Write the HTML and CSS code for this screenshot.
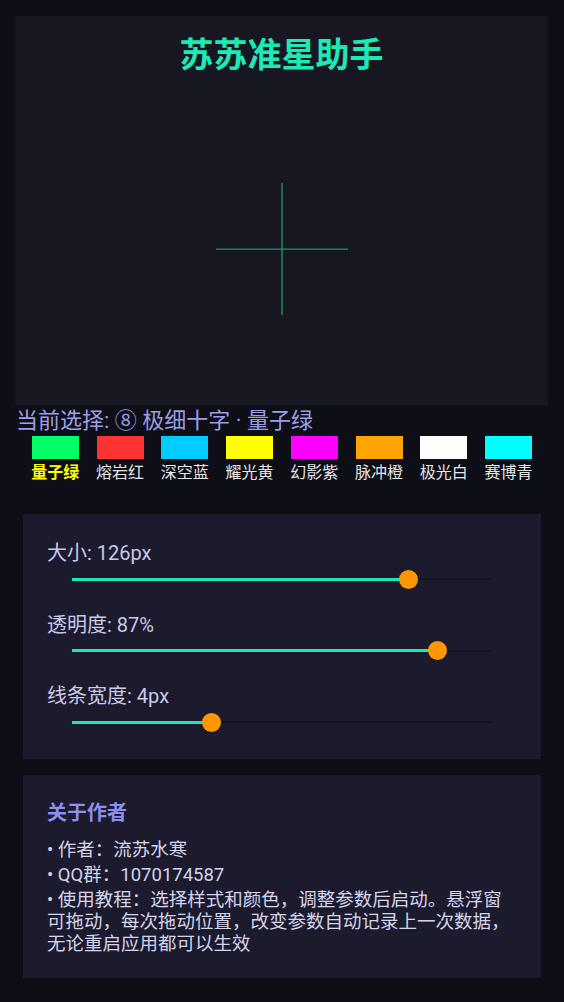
FILE: index.html
```html
<!DOCTYPE html>
<html lang="zh-CN">
<head>
<meta charset="UTF-8">
<meta name="viewport" content="width=device-width, initial-scale=1.0">
<title>苏苏准星助手</title>
<link rel="stylesheet" href="styles.css">
</head>
<body>
<div class="app">
    <section class="preview">
        <h1 class="title">苏苏准星助手</h1>
        <!-- 极细十字 -->
        <svg class="cross" width="132" height="132" viewBox="0 0 132 132">
            <rect x="65" y="0" width="2" height="132" fill="#1f6d4d" />
            <rect x="0" y="65.5" width="132" height="1.3" fill="#2b8c63" />
        </svg>
    </section>

    <p class="current">当前选择: ⑧ 极细十字 · 量子绿</p>

    <ul class="colors">
        <li class="active"><span class="swatch green"></span><span class="name">量子绿</span></li>
        <li><span class="swatch red"></span><span class="name">熔岩红</span></li>
        <li><span class="swatch blue"></span><span class="name">深空蓝</span></li>
        <li><span class="swatch yellow"></span><span class="name">耀光黄</span></li>
        <li><span class="swatch purple"></span><span class="name">幻影紫</span></li>
        <li><span class="swatch orange"></span><span class="name">脉冲橙</span></li>
        <li><span class="swatch white"></span><span class="name">极光白</span></li>
        <li><span class="swatch cyan"></span><span class="name">赛博青</span></li>
    </ul>

    <section class="card sliders">
        <div class="field">
            <label>大小: 126px</label>
            <div class="slider">
                <div class="fill" style="width: 80%"></div>
                <span class="thumb" style="left: 80%"></span>
            </div>
        </div>
        <div class="field">
            <label>透明度: 87%</label>
            <div class="slider">
                <div class="fill" style="width: 87%"></div>
                <span class="thumb" style="left: 87%"></span>
            </div>
        </div>
        <div class="field">
            <label>线条宽度: 4px</label>
            <div class="slider">
                <div class="fill" style="width: 33.3%"></div>
                <span class="thumb" style="left: 33.3%"></span>
            </div>
        </div>
    </section>

    <section class="card about">
        <h2>关于作者</h2>
        <ul>
            <li>• 作者：流苏水寒</li>
            <li>• QQ群：1070174587</li>
            <li>• 使用教程：选择样式和颜色，调整参数后启动。悬浮窗可拖动，每次拖动位置，改变参数自动记录上一次数据，无论重启应用都可以生效</li>
        </ul>
    </section>
</div>
</body>
</html>
```

FILE: styles.css
```css
* {
    box-sizing: border-box;
}
body {
    margin: 0;
    background: #0d0e16;
    font-family: Roboto, "Noto Sans CJK SC", sans-serif;
}
.preview {
    margin: 16px 16px 0 15px;
    height: 389px;
    padding-top: 19px;
    display: flex;
    flex-direction: column;
    align-items: center;
    background: #161721;
}
.title {
    margin: 0;
    font-size: 34px;
    line-height: 40px;
    font-weight: bold;
    color: #1de9b6;
}
.cross {
    display: block;
    margin-top: 108px;
}
.current {
    margin: 2px 0 0;
    padding-left: 16px;
    font-size: 22px;
    line-height: 28px;
    color: #9b9ee6;
}
.colors {
    margin: 1px 0 0;
    padding: 0 23px;
    list-style: none;
    display: grid;
    grid-template-columns: repeat(8, 1fr);
}
.colors li {
    display: flex;
    flex-direction: column;
    align-items: center;
}
.swatch {
    width: 47px;
    height: 23px;
}
.green { background: #00ff66; }
.red { background: #ff3333; }
.blue { background: #00ccff; }
.yellow { background: #ffff00; }
.purple { background: #ff00ff; }
.orange { background: #ffa500; }
.white { background: #ffffff; }
.cyan { background: #00ffff; }
.name {
    margin-top: 4px;
    font-size: 16px;
    line-height: 20px;
    color: #e6e6e6;
}
.active .name {
    color: #ffff00;
    font-weight: bold;
}
.card {
    margin: 31px 23px 0;
    padding: 27px 24px;
    background: #1c1b2d;
}
.field label {
    display: block;
    font-size: 20px;
    line-height: 24px;
    color: #c9c9e8;
}
.field + .field {
    margin-top: 23.5px;
}
.slider {
    position: relative;
    margin: 4px 25px 0;
    height: 20px;
}
.slider::before {
    content: "";
    position: absolute;
    left: 0;
    right: 0;
    top: 9px;
    height: 2px;
    background: #15151f;
}
.fill {
    position: absolute;
    left: 0;
    top: 8.5px;
    height: 3px;
    background: #1de9b6;
}
.thumb {
    position: absolute;
    top: 0.5px;
    width: 19px;
    height: 19px;
    margin-left: -9.5px;
    border-radius: 50%;
    background: #ff9800;
}
.about {
    margin-top: 16px;
    padding: 25px 24px 23.5px;
}
.about h2 {
    margin: 0;
    font-size: 20px;
    line-height: 26px;
    font-weight: bold;
    color: #8e8ff0;
}
.about ul {
    margin: 12.5px 0 0;
    padding: 0;
    list-style: none;
    font-size: 18.5px;
    line-height: 22px;
    color: #d4d4ec;
}
.about li + li {
    margin-top: 3px;
}
```
